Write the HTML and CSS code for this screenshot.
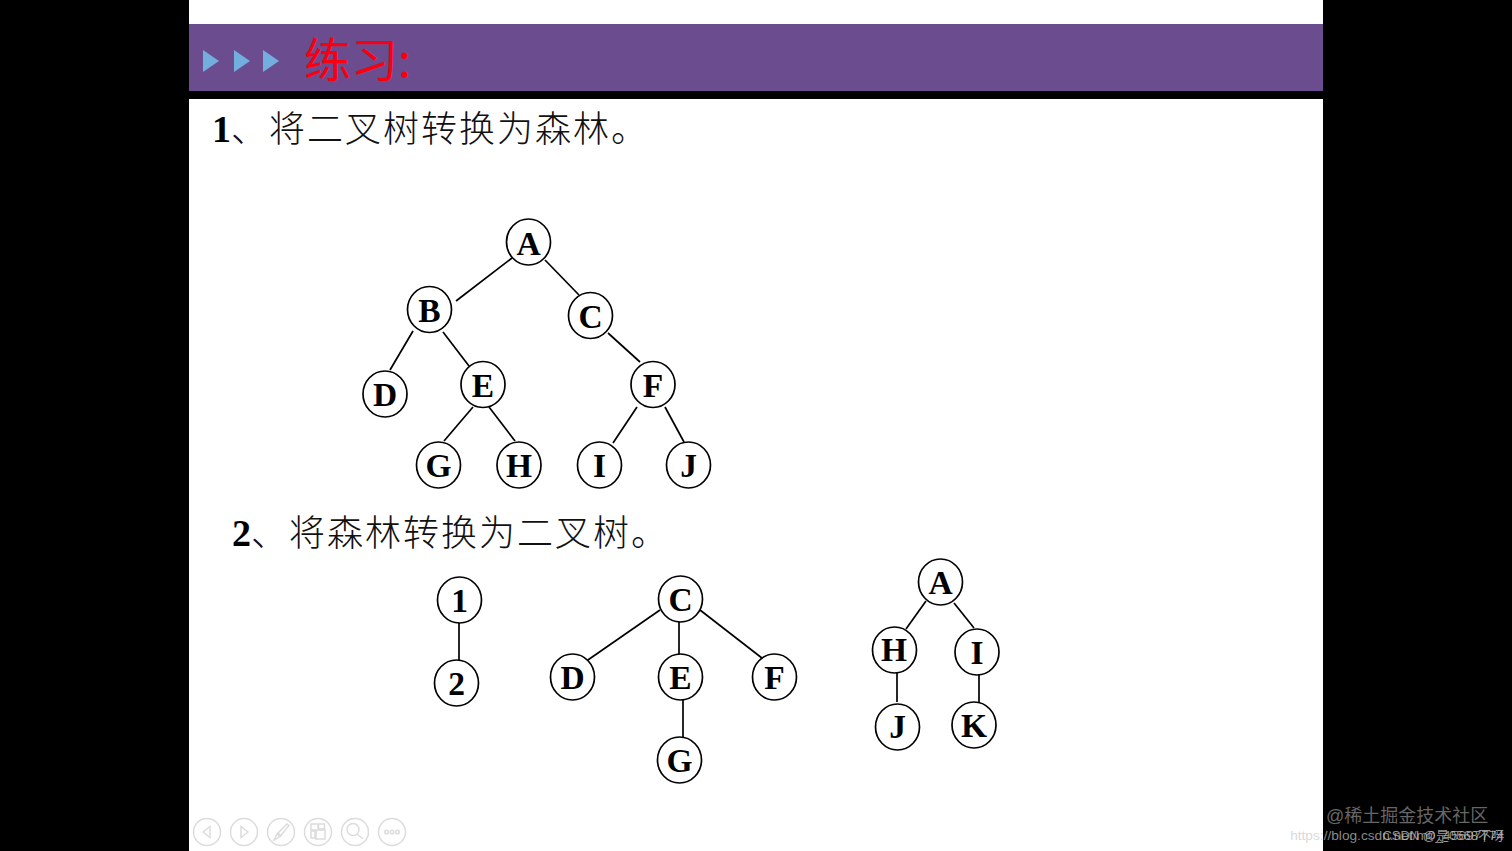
FILE: index.html
```html
<!DOCTYPE html>
<html lang="zh-CN">
<head>
<meta charset="utf-8">
<title>练习</title>
<link rel="stylesheet" href="styles.css">
</head>
<body>
<div class="stage">
  <aside class="pillar"></aside>
  <main class="slide">
    <header class="banner">
      <div class="arrows">
        <span class="arrow arrow-first"></span><span class="arrow"></span><span class="arrow"></span>
      </div>
      <h1 class="title">练习:</h1>
    </header>
    <p class="task task-one"><b class="num">1</b>、将二叉树转换为森林。</p>
    <p class="task task-two"><b class="num">2</b>、将森林转换为二叉树。</p>

    <svg class="diagram" viewBox="189 0 1134 851" width="1134" height="851">
      <g class="edges">
        <line x1="512" y1="258" x2="456" y2="301"/><line x1="545" y1="260" x2="579" y2="295"/>
        <line x1="413" y1="331" x2="390" y2="370"/><line x1="443" y1="332" x2="469" y2="366"/>
        <line x1="608" y1="333" x2="640" y2="362"/><line x1="473" y1="407" x2="444" y2="441"/>
        <line x1="489" y1="407" x2="515" y2="441"/><line x1="637" y1="407" x2="613" y2="443"/>
        <line x1="665" y1="407" x2="684" y2="442"/>
        <line x1="459" y1="622" x2="459" y2="661"/><line x1="660" y1="610" x2="585" y2="662"/>
        <line x1="679" y1="622" x2="679" y2="655"/><line x1="700" y1="610" x2="767" y2="662"/>
        <line x1="683" y1="700" x2="683" y2="738"/><line x1="926" y1="601" x2="906" y2="629"/>
        <line x1="954" y1="603" x2="974" y2="628"/><line x1="897" y1="672" x2="897" y2="702"/>
        <line x1="979" y1="675" x2="979" y2="703"/>
      </g>
      <g class="nodes">
        <ellipse cx="528.500" cy="242" rx="22" ry="23"/><text x="528.500" y="255">A</text>
        <ellipse cx="429.500" cy="309.500" rx="22" ry="23"/><text x="429.500" y="322">B</text>
        <ellipse cx="590.500" cy="315.500" rx="22" ry="23"/><text x="590.500" y="328">C</text>
        <ellipse cx="385" cy="394" rx="22" ry="23"/><text x="385" y="406">D</text>
        <ellipse cx="483" cy="384.500" rx="22" ry="23"/><text x="483" y="397">E</text>
        <ellipse cx="653" cy="384.500" rx="22" ry="23"/><text x="653" y="397">F</text>
        <ellipse cx="438.500" cy="465" rx="22" ry="23"/><text x="438.500" y="477">G</text>
        <ellipse cx="519" cy="465" rx="22" ry="23"/><text x="519" y="477">H</text>
        <ellipse cx="599.500" cy="465" rx="22" ry="23"/><text x="599.500" y="477">I</text>
        <ellipse cx="688.500" cy="465" rx="22" ry="23"/><text x="688.500" y="477">J</text>

        <ellipse cx="459.500" cy="600" rx="22" ry="23"/><text x="459.500" y="612">1</text>
        <ellipse cx="456.500" cy="683" rx="22" ry="23"/><text x="456.500" y="695">2</text>
        <ellipse cx="680.500" cy="599" rx="22" ry="23"/><text x="680.500" y="611">C</text>
        <ellipse cx="572.500" cy="677" rx="22" ry="23"/><text x="572.500" y="689">D</text>
        <ellipse cx="680.500" cy="677" rx="22" ry="23"/><text x="680.500" y="689">E</text>
        <ellipse cx="774.500" cy="677" rx="22" ry="23"/><text x="774.500" y="689">F</text>
        <ellipse cx="679.500" cy="760" rx="22" ry="23"/><text x="679.500" y="772">G</text>
        <ellipse cx="940.500" cy="582" rx="22" ry="23"/><text x="940.500" y="594">A</text>
        <ellipse cx="894.500" cy="650" rx="22" ry="23"/><text x="894" y="661">H</text>
        <ellipse cx="977" cy="652" rx="22" ry="23"/><text x="977" y="664">I</text>
        <ellipse cx="897.500" cy="727" rx="22" ry="23"/><text x="897.500" y="738">J</text>
        <ellipse cx="974" cy="725" rx="22" ry="23"/><text x="974" y="737">K</text>
      </g>
    </svg>

    <nav class="controls">
      <svg class="ctl" viewBox="0 0 30 30"><circle cx="15" cy="15" r="13.500"/><path d="M18 9.500v11l-7-5.500z"/></svg>
      <svg class="ctl" viewBox="0 0 30 30"><circle cx="15" cy="15" r="13.500"/><path d="M12 9.500v11l7-5.500z"/></svg>
      <svg class="ctl" viewBox="0 0 30 30"><circle cx="15" cy="15" r="13.500"/><path d="M21 7l2 1.500-8 10-3-2.500zM11 17l3 2.500-6 3.500z"/></svg>
      <svg class="ctl" viewBox="0 0 30 30"><circle cx="15" cy="15" r="13.500"/><path d="M8 7h7v6H8zM15.500 7h6v5h-6zM8 14h4v7H8zM13 13h9v9h-9z"/></svg>
      <svg class="ctl" viewBox="0 0 30 30"><circle cx="15" cy="15" r="13.500"/><circle cx="13" cy="12.500" r="6"/><path d="M17 17l6 5"/></svg>
      <svg class="ctl" viewBox="0 0 30 30"><circle cx="15" cy="15" r="13.500"/><circle cx="9.500" cy="15" r="1.800"/><circle cx="15" cy="15" r="1.800"/><circle cx="20.500" cy="15" r="1.800"/></svg>
    </nav>
  </main>
  <aside class="pillar"></aside>
</div>
<div class="marks">
  <div class="mark-juejin">@稀土掘金技术社区</div>
  <div class="mark-line">
    <span class="mark-url">https://blog.csdn.net/m0_45697774</span>
    <span class="mark-csdn">CSDN @是0568不呀</span>
  </div>
</div>
</body>
</html>
```

FILE: styles.css
```css
* { box-sizing: border-box; }
html, body { margin: 0; height: 100%; overflow: hidden; background: #000; }
.stage { display: flex; width: 1512px; height: 851px; }
.pillar { flex: 1 1 0; background: #000; }
.slide {
  position: relative;
  width: 1134px;
  height: 851px;
  background: #fff;
  padding-top: 24px;
  font-family: "Noto Sans CJK SC", "Liberation Serif", serif;
  overflow: hidden;
}
.banner {
  display: flex;
  align-items: center;
  height: 75px;
  background: #6b4d8f;
  border-bottom: 8px solid #000;
  padding-left: 14px;
}
.arrows { display: flex; gap: 13px; margin-right: 25px; margin-top: 7px; }
.arrow {
  width: 0;
  height: 0;
  border-left: 16px solid #72aede;
  border-top: 11px solid transparent;
  border-bottom: 11px solid transparent;
}
.arrow-first { margin-right: 2px; }
.title {
  margin: 0 0 1px;
  font-size: 47px;
  font-weight: 400;
  line-height: 64px;
  color: #f8000f;
  letter-spacing: 0;
}
.task {
  margin: 0;
  color: #111;
  font-size: 36px;
  font-weight: 300;
  line-height: 54px;
  letter-spacing: 2px;
  white-space: nowrap;
}
.num {
  font-family: "Liberation Serif", serif;
  font-weight: 700;
  font-size: 38px;
  color: #000;
  margin-right: -2px;
}
.task-one { padding-left: 23px; }
.task-two { margin-top: 347px; padding-left: 43px; }
.diagram { position: absolute; left: 0; top: 0; }
.edges line { stroke: #000; stroke-width: 1.700; }
.nodes ellipse { fill: #fff; stroke: #000; stroke-width: 1.700; }
.nodes text {
  font-family: "Liberation Serif", serif;
  font-weight: 700;
  font-size: 33.500px;
  text-anchor: middle;
  fill: #000;
}
.controls {
  position: absolute;
  left: 3px;
  top: 817px;
  display: flex;
  gap: 7px;
}
.ctl {
  width: 30px;
  height: 30px;
  fill: none;
  stroke: #dcdcdc;
  stroke-width: 1.500;
}
.marks {
  position: absolute;
  right: 0;
  top: 804px;
  width: 221px;
  height: 47px;
  font-family: "Liberation Sans", "Noto Sans CJK SC", sans-serif;
}
.mark-juejin {
  position: absolute;
  left: 35px;
  top: 0;
  font-size: 18px;
  line-height: 24px;
  color: #666;
  white-space: nowrap;
}
.mark-line { position: absolute; left: 0; top: 24px; width: 221px; height: 16px; font-size: 13.700px; line-height: 16px; }
.mark-url { position: absolute; right: 8px; top: 0; color: rgba(200, 200, 200, .7); white-space: nowrap; }
.mark-csdn { position: absolute; right: 8px; top: 0; color: rgba(200, 200, 200, .75); font-size: 13px; white-space: nowrap; }
```
